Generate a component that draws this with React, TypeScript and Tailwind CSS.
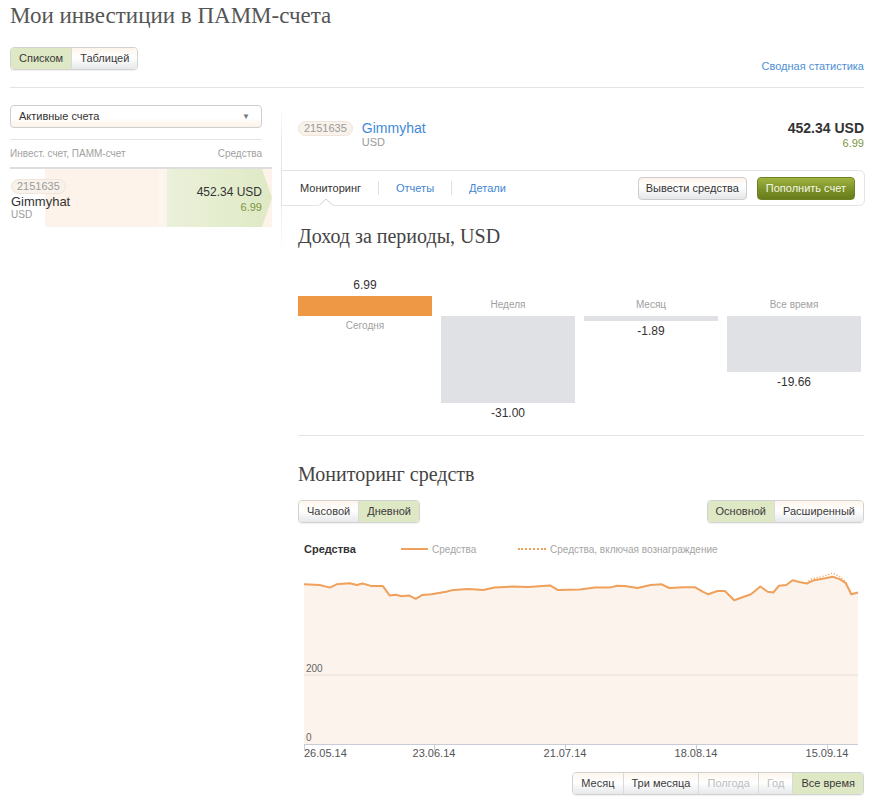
import React from 'react';

const sans = 'font-["Liberation_Sans",Arial,sans-serif]';
const serif = 'font-["Liberation_Serif",Georgia,serif]';

const Seg = ({ items, active, disabled = [] }: { items: string[]; active: number; disabled?: number[] }) => (
  <div className="flex rounded-[4px] border border-[#d2d2d2] overflow-hidden shadow-[0_1px_1px_rgba(0,0,0,0.06)]">
    {items.map((t, i) => (
      <div
        key={t}
        className={`h-[21px] px-[8px] flex items-center text-[11px] ${i > 0 ? 'border-l border-[#dadada]' : ''} ${
          active === i ? 'bg-[#dfe8c5] text-[#3a3a3a]' : 'bg-[linear-gradient(#fdf5ec,#ffffff_45%,#e6e8ea)]'
        } ${disabled.includes(i) ? 'text-[#bdbdbd]' : active === i ? '' : 'text-[#3a3a3a]'}`}
      >
        {t}
      </div>
    ))}
  </div>
);

const bars = [
  { label: 'Сегодня', value: '6.99', h: 20, pos: true },
  { label: 'Неделя', value: '-31.00', h: 87, pos: false },
  { label: 'Месяц', value: '-1.89', h: 5, pos: false },
  { label: 'Все время', value: '-19.66', h: 56, pos: false },
];

const pts: [number, number][] = [
  [6, 20.3], [21.7, 21], [32.1, 23.6], [38.5, 20.3], [51.5, 19.2], [58.9, 21], [64.5, 19.5], [73.8, 22.1],
  [84.9, 22.1], [91.6, 31.4], [97.9, 30.7], [103.5, 32.2], [111, 31.4], [117.7, 34.8], [124, 31.1],
  [133.3, 30.3], [148.1, 27.7], [155.6, 25.9], [170.4, 25.1], [185.3, 25.9], [196.5, 23.6], [215, 22.5],
  [229.9, 22.9], [252.2, 21.4], [259.7, 25.9], [282, 25.5], [296.8, 23.6], [311.7, 23.6], [319.1, 21.8],
  [326.6, 22.1], [339.6, 24], [352.6, 21], [363.7, 20.3], [371.2, 24], [386.1, 23.3], [397.2, 23.3],
  [404.6, 27.7], [410.2, 30.3], [419.5, 27], [426.9, 27], [436.2, 36.3], [453, 30.3], [462.3, 22.5],
  [469.7, 27.7], [475.3, 28.5], [480.8, 21.8], [488.3, 21], [494.6, 16.2], [501.3, 18], [508.7, 19.5],
  [516.2, 16.2], [527.3, 14.3], [534.8, 12.8], [542.2, 15.4], [547.8, 19.2], [553.3, 30.3], [560, 28.5],
];
const dotted: [number, number][] = [
  [508.7, 19.5], [512.4, 15.4], [527.3, 11.7], [534.8, 9.1], [542.2, 12.8], [547.8, 18], [553.3, 30.3],
];

const line = pts.map((p, i) => `${i ? 'L' : 'M'}${p[0]},${p[1]}`).join(' ');
const area = `${line} L560,180 L6,180 Z`;
const dline = dotted.map((p, i) => `${i ? 'L' : 'M'}${p[0]},${p[1]}`).join(' ');

const EquityChart = () => (
  <svg width="566" height="197" className="block">
    <path d={area} fill="#fcf4ec" />
    <line x1="6" y1="111" x2="560" y2="111" stroke="#e4e0dc" strokeWidth="1" />
    <path d={dline} fill="none" stroke="#f0a257" strokeWidth="1.5" strokeDasharray="1 2" />
    <path d={line} fill="none" stroke="#efa05a" strokeWidth="2" strokeLinejoin="round" />
    <line x1="6" y1="180.5" x2="560" y2="180.5" stroke="#c7ccd6" strokeWidth="1" />
    {[6, 136, 267, 398, 529].map(x => (
      <line key={x} x1={x + 0.5} y1="180" x2={x + 0.5} y2="186" stroke="#c7ccd6" strokeWidth="1" />
    ))}
    <text x="8" y="108" fontSize="10" fill="#666" fontFamily="Liberation Sans, Arial, sans-serif">200</text>
    <text x="8" y="177" fontSize="10" fill="#666" fontFamily="Liberation Sans, Arial, sans-serif">0</text>
    <g fontSize="11" fill="#555" fontFamily="Liberation Sans, Arial, sans-serif">
      <text x="6" y="193">26.05.14</text>
      <text x="136" y="193" textAnchor="middle">23.06.14</text>
      <text x="267" y="193" textAnchor="middle">21.07.14</text>
      <text x="398" y="193" textAnchor="middle">18.08.14</text>
      <text x="529" y="193" textAnchor="middle">15.09.14</text>
    </g>
  </svg>
);

export default function App() {
  return (
    <div className={`${sans} w-[873px] pl-[10px] pr-[9px] bg-white text-[#333]`}>
      <h1 className={`${serif} h-[32px] leading-[32px] text-[23px] text-[#555]`}>Мои инвестиции в ПАММ-счета</h1>

      <div className="mt-[15px] flex justify-between items-end">
        <Seg items={['Списком', 'Таблицей']} active={0} />
        <a className="text-[11px] leading-[14px] text-[#4d90d6] mb-[-3px]">Сводная статистика</a>
      </div>
      <div className="h-px bg-[#e3e3e3] mt-[17px]" />

      <div className="flex">
        {/* left column */}
        <div className="w-[252px] pt-[17px]">
          <div className="h-[23px] rounded-[4px] border border-[#cfcfcf] bg-[linear-gradient(#ffffff_55%,#fdf2e8)] flex items-center justify-between pl-[8px] pr-[11px] text-[11px] text-[#333]">
            <span>Активные счета</span>
            <span className="text-[8px] text-[#777]">▼</span>
          </div>
          <div className="mt-[11px] border-t border-[#e4e4e4] h-[28px] flex items-center justify-between text-[10px] text-[#a2a2a2]">
            <span>Инвест. счет, ПАММ-счет</span>
            <span>Средства</span>
          </div>
          <div className="border-t-2 border-[#dedede] w-[262px] h-[60px] flex bg-[linear-gradient(to_right,#ffffff_35px,#fdf3ea_35px,#fdf3ea_148px,#fbf7f2_150px,#fdf3ea_157px)]">
            <div className="flex-1 pt-[10px] pl-px">
              <div className="w-fit flex h-[15px] items-center px-[5px] rounded-full bg-[#f8f2ea] border border-[#efe5da] text-[11px] text-[#9a9a9a]">2151635</div>
              <div className="mt-px text-[13px] leading-[14px] text-[#333]">Gimmyhat</div>
              <div className="text-[10px] leading-[12px] text-[#9a9a9a]">USD</div>
            </div>
            <div className="w-[105px] pr-[10px] text-right pt-[15px] bg-[linear-gradient(to_right,#ebf1da,#dfe9c4)] [clip-path:polygon(0_0,95px_0,105px_50%,95px_100%,0_100%)]">
              <div className="text-[12px] leading-[16px] text-[#333]">452.34 USD</div>
              <div className="text-[11px] leading-[14px] text-[#7c9540]">6.99</div>
            </div>
          </div>
        </div>

        {/* right column */}
        <div className="ml-[19px] flex-1 bg-[linear-gradient(to_bottom,rgba(230,230,230,0),#e6e6e6_25%,#e6e6e6_60%,rgba(230,230,230,0))] bg-no-repeat bg-[length:1px_150px] bg-[position:0_17px]">
          <div className="pt-[32px] pl-[17px] flex justify-between items-start">
            <div className="flex items-start">
              <div className="mt-px h-[15px] flex items-center px-[5px] rounded-full bg-[#f8f2ea] border border-[#efe5da] text-[11px] text-[#9a9a9a]">2151635</div>
              <div className="ml-[9px]">
                <div className="text-[14px] leading-[16px] text-[#3f8ad8]">Gimmyhat</div>
                <div className="text-[11px] leading-[12px] text-[#9a9a9a]">USD</div>
              </div>
            </div>
            <div className="text-right">
              <div className="text-[14px] leading-[16px] font-bold text-[#333]">452.34 USD</div>
              <div className="text-[11px] leading-[14px] text-[#7c9540]">6.99</div>
            </div>
          </div>

          <div className="relative mt-[20px] mr-[-1px] h-[36px] border border-[#e3e3e3] rounded-r-[6px] flex items-center justify-between pl-[18px] pr-[9px]">
            <div className="flex items-center text-[11px]">
              <span className="text-[#333]">Мониторинг</span>
              <span className="mx-[17px] h-[14px] w-px bg-[#e0e0e0]" />
              <span className="text-[#3f85d3]">Отчеты</span>
              <span className="mx-[17px] h-[14px] w-px bg-[#e0e0e0]" />
              <span className="text-[#3f85d3]">Детали</span>
            </div>
            <div className="flex gap-[10px] text-[11px]">
              <div className="h-[23px] px-[7px] flex items-center rounded-[4px] border border-[#cdcdcd] bg-[linear-gradient(#fdf4ea,#ffffff_40%,#e5e6e8)] text-[#333]">Вывести средства</div>
              <div className="h-[23px] px-[8px] flex items-center rounded-[4px] border border-[#6f8222] bg-[linear-gradient(#a0b443,#7c9127_55%,#687b1b)] text-[#f4f7e8]">Пополнить счет</div>
            </div>
            <svg className="absolute left-[37px] bottom-[-1px]" width="14" height="8" viewBox="0 0 14 8">
              <path d="M0 7.5 L7 1 L14 7.5" fill="#fff" stroke="#d0d0d0" strokeWidth="1" />
              <rect x="0" y="7" width="14" height="1" fill="#fff" />
            </svg>
          </div>

          <div className="pl-[17px]">
            <h2 className={`${serif} mt-[18px] text-[20px] leading-[24px] text-[#444]`}>Доход за периоды, USD</h2>

            <div className="mt-[28px] flex gap-[9px] border-b border-[#e3e3e3]">
              {bars.map(b => (
                <div key={b.label} className="w-[134px] text-center">
                  <div className="h-[40px] flex flex-col justify-end">
                    {b.pos ? (
                      <>
                        <div className="text-[12px] leading-[16px] text-[#333] mb-[3px]">{b.value}</div>
                        <div className="bg-[#ee9744]" style={{ height: b.h }} />
                      </>
                    ) : (
                      <div className="text-[10px] leading-[14px] text-[#9f9f9f] mb-[4px]">{b.label}</div>
                    )}
                  </div>
                  <div className="h-[116px]">
                    {b.pos ? (
                      <div className="mt-[3px] text-[10px] leading-[14px] text-[#9f9f9f]">{b.label}</div>
                    ) : (
                      <>
                        <div className="bg-[#dfe1e4]" style={{ height: b.h }} />
                        <div className="mt-[2px] text-[12px] leading-[16px] text-[#333]">{b.value}</div>
                      </>
                    )}
                  </div>
                </div>
              ))}
            </div>

            <h2 className={`${serif} mt-[26px] text-[20px] leading-[24px] text-[#444]`}>Мониторинг средств</h2>

            <div className="mt-[14px] flex justify-between">
              <Seg items={['Часовой', 'Дневной']} active={1} />
              <Seg items={['Основной', 'Расширенный']} active={0} />
            </div>

            <div className="mt-[19px] pl-[6px] flex items-center h-[14px]">
              <span className="text-[11px] font-bold text-[#333] w-[97px]">Средства</span>
              <span className="w-[27px] h-[2px] bg-[#efa05a]" />
              <span className="ml-[4px] text-[10px] text-[#a5a5a5] w-[86px]">Средства</span>
              <span className="w-[28px] border-t-[2px] border-dotted border-[#f0a257]" />
              <span className="ml-[4px] text-[10px] text-[#a5a5a5]">Средства, включая вознаграждение</span>
            </div>

            <div className="mt-[8px] w-[566px]">
              <EquityChart />
            </div>

            <div className="mt-[11px] flex justify-end pb-[8px]">
              <Seg items={['Месяц', 'Три месяца', 'Полгода', 'Год', 'Все время']} active={4} disabled={[2, 3]} />
            </div>
          </div>
        </div>
      </div>
    </div>
  );
}
